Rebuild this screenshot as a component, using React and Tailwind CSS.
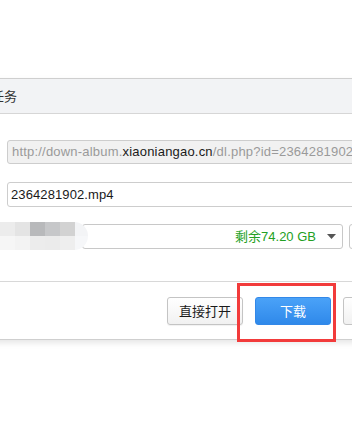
import React from "react";

const mosaicTop = ["#ececec", "#e4e4e4", "#b8b9bb", "#c6c7c9", "#d2d2d2", "#f3f4f6"];
const mosaicBottom = ["#f6f6f6", "#f3f3f3", "#ececec", "#ebebeb", "#eeeeee", "#f6f7f9"];

export default function App() {
  return (
    <div className="relative w-[352px] h-[439px] overflow-hidden bg-white font-['Liberation_Sans','Noto_Sans_CJK_SC',sans-serif] text-[13px]">
      <div className="pt-[78px]">
        <div className="-ml-[80px] w-[520px] bg-white border-t border-b border-[#cfcfcf] shadow-[0_3px_6px_rgba(0,0,0,0.10)]">
          <div className="h-[35px] bg-[#f2f3f5] border-b border-[#d6d6d6] flex items-center pl-[19px] text-[13px] text-[#333] font-['Noto_Sans_CJK_SC',sans-serif]">
            新建下载任务
          </div>
          <div className="pl-[87px] pt-[26px] flex flex-col">
            <div className="h-[24px] w-[420px] border border-[#cdcdcd] rounded-[3px] bg-[#f1f1f1] flex items-center pl-[4px] text-[#9a9a9a] whitespace-nowrap tracking-[0.2px]">
              http://down-album.<span className="text-[#1a1a1a]">xiaoniangao.cn</span>/dl.php?id=2364281902
            </div>
            <div className="mt-[18px] h-[25px] w-[420px] border border-[#cdcdcd] rounded-[3px] bg-white flex items-center pl-[3px] text-[#1a1a1a] whitespace-nowrap tracking-[0.1px]">
              2364281902.mp4
            </div>
            <div className="mt-[17px] h-[25px] flex items-center">
              <div className="w-[75px] shrink-0" />
              <div className="w-[261px] h-[25px] shrink-0 border border-[#c8c8c8] rounded-[3px] bg-white flex items-center justify-end pr-[6px]">
                <span className="text-[#23a023] text-[13px] leading-none">
                  剩余74.20 GB
                </span>
                <svg width="9" height="5" viewBox="0 0 9 5" className="ml-[11px]">
                  <polygon points="0,0 9,0 4.5,5" fill="#555" />
                </svg>
              </div>
              <div className="ml-[6px] w-[60px] h-[25px] shrink-0 border border-[#c8c8c8] rounded-[3px] bg-white" />
            </div>
          </div>
          <div className="mt-[32px] border-t border-[#d8d8d8] h-[58px] flex items-center gap-[12px] pl-[247px]">
            <div className="w-[76px] h-[28px] shrink-0 border border-[#c4c4c4] rounded-[3px] bg-gradient-to-b from-white to-[#f1f1f1] shadow-[0_1px_1px_rgba(0,0,0,0.06)] flex items-center justify-center text-[#1a1a1a] font-['Noto_Sans_CJK_SC',sans-serif]">
              直接打开
            </div>
            <div className="w-[76px] h-[28px] shrink-0 border border-[#3388e8] rounded-[3px] bg-gradient-to-b from-[#4aa2f8] to-[#2f89ea] flex items-center justify-center text-white font-['Noto_Sans_CJK_SC',sans-serif]">
              下载
            </div>
            <div className="w-[76px] h-[28px] shrink-0 border border-[#c4c4c4] rounded-[3px] bg-gradient-to-b from-white to-[#f1f1f1]" />
          </div>
        </div>
      </div>

      <div className="absolute left-0 top-[222px] w-[88px] h-[28px] rounded-r-[14px] overflow-hidden flex flex-col">
        <div className="flex h-[14px]">
          {mosaicTop.map((c, i) => (
            <div key={i} className="h-full w-[15px] shrink-0" style={{ backgroundColor: c }} />
          ))}
        </div>
        <div className="flex h-[14px]">
          {mosaicBottom.map((c, i) => (
            <div key={i} className="h-full w-[15px] shrink-0" style={{ backgroundColor: c }} />
          ))}
        </div>
      </div>

      <div className="absolute left-[237px] top-[283px] w-[99px] h-[59px] border-[3px] border-[#f23b3b]" />
    </div>
  );
}
